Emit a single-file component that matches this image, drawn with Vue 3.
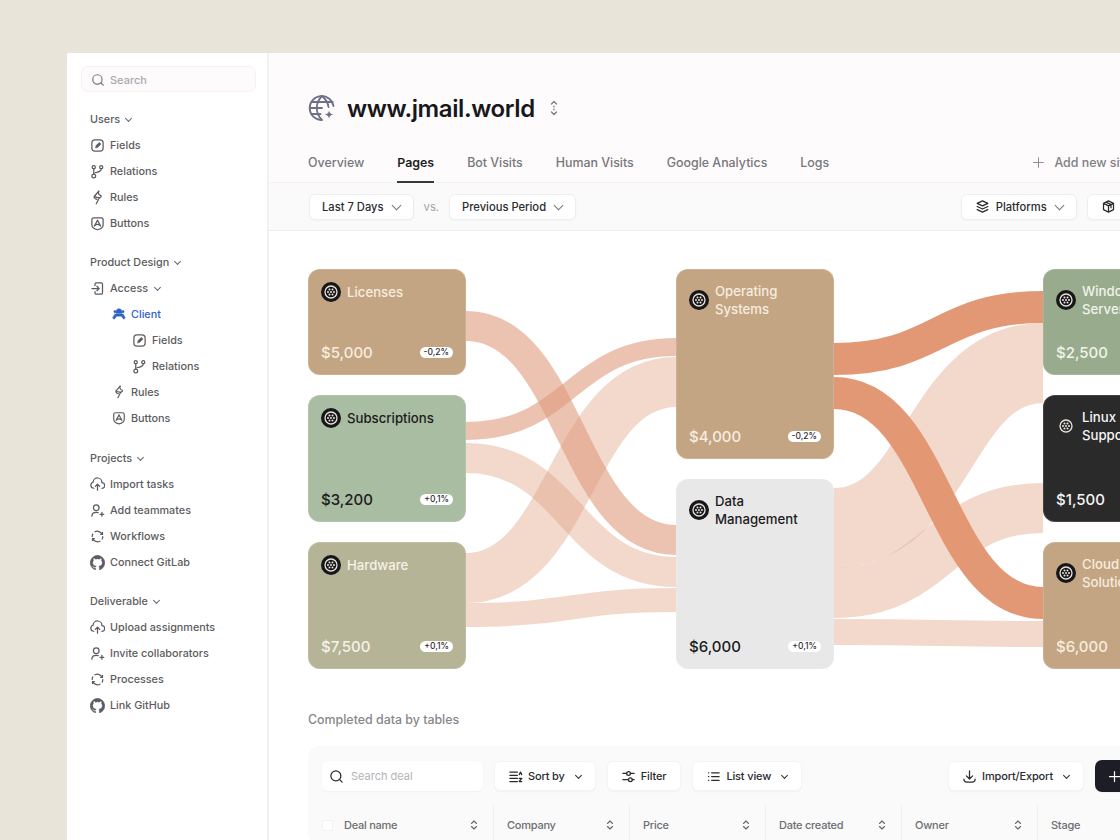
<template>
  <div class="panel">
    <aside class="sidebar">
      <div class="search">
        <svg class="ico" viewBox="0 0 24 24"><circle cx="11" cy="11" r="8" /><path d="M17 17l4 4" /></svg>
        <span>Search</span>
      </div>
      <section v-for="group in nav" :key="group.title" class="group">
        <div class="group-title">{{ group.title }}<span class="caret"></span></div>
        <div
          v-for="item in group.items"
          :key="item.label + item.level"
          class="nav-item"
          :class="['level-' + (item.level || 0), { active: item.active }]"
        >
          <svg class="ico" viewBox="0 0 24 24" :class="{ solid: item.icon === 'client' || item.icon === 'github' }">
            <path v-for="d in icons[item.icon]" :key="d" :d="d" />
            <path v-if="item.icon === 'edit'" class="pencil" d="M9 15.500l.8-3.500 5-5 2.700 2.700-5 5z" />
          </svg>
          <span>{{ item.label }}</span>
          <span v-if="item.caret" class="caret"></span>
        </div>
      </section>
    </aside>

    <main class="main">
      <header class="head">
        <div class="title-row">
          <svg class="globe" viewBox="0 0 28 28">
            <path d="M25.500 12A12 12 0 1 0 13 26" />
            <path d="M2 14h12M3.500 8h21M3.500 20h9" />
            <path d="M14 2c-7 7-7 17 0 24M14 2c4 3.500 6 7 6.500 11" />
            <path class="spark" d="M21 15.500l1.500 3.500 3.500 1.500-3.500 1.500-1.500 3.500-1.500-3.500-3.500-1.500 3.500-1.500z" />
          </svg>
          <h1>www.jmail.world</h1>
          <svg class="updown" viewBox="0 0 10 18">
            <path d="M2.500 5L5 2.500 7.500 5M2.500 13L5 15.500 7.500 13M5 7v1M5 10v1" />
          </svg>
        </div>
        <nav class="tabs">
          <a v-for="tab in tabs" :key="tab" class="tab" :class="{ current: tab === 'Pages' }">{{ tab }}</a>
          <span class="add-site">
            <svg class="ico" viewBox="0 0 24 24"><path d="M12 3v18M3 12h18" /></svg>
            Add new site
          </span>
        </nav>
      </header>

      <div class="filters">
        <button class="btn period">Last 7 Days<span class="chev"></span></button>
        <span class="vs">vs.</span>
        <button class="btn period">Previous Period<span class="chev"></span></button>
        <button class="btn push platform">
          <svg class="ico dark" viewBox="0 0 24 24">
            <path d="M12 3l8.500 4-8.500 4-8.500-4zM3.500 12l8.500 4 8.500-4M3.500 17l8.500 4 8.500-4" />
          </svg>
          Platforms<span class="chev"></span>
        </button>
        <button class="btn platform">
          <svg class="ico dark" viewBox="0 0 24 24">
            <path d="M12 3l8 4v10l-8 4-8-4V7zM4 7l8 4 8-4M12 11v10M8 5l8 4v5" />
          </svg>
          Browsers<span class="chev"></span>
        </button>
      </div>

      <section class="sankey">
        <svg class="ribbons" viewBox="308 269 812 400">
          <path
            v-for="r in ribbons"
            :key="r.id"
            :d="ribbonPath(r)"
            :class="r.tone"
            :stroke-width="r.w"
          />
        </svg>
        <div v-for="(col, i) in columns" :key="i" class="col">
          <article
            v-for="card in col"
            :key="card.name"
            class="card"
            :class="card.cls"
            :style="{ height: card.h + 'px' }"
          >
            <div class="card-top">
              <svg class="badge-ico" viewBox="0 0 20 20">
                <circle class="disc" cx="10" cy="10" r="10" />
                <circle class="ring" cx="10" cy="10" r="6" />
                <circle v-for="p in dots" :key="p[0] + '-' + p[1]" class="dot" :cx="p[0]" :cy="p[1]" r="1" />
              </svg>
              <div class="card-name">{{ card.name }}</div>
            </div>
            <div class="card-foot">
              <span class="card-value">{{ card.value }}</span>
              <span class="card-delta">{{ card.delta }}</span>
            </div>
          </article>
        </div>
      </section>

      <h2 class="sub">Completed data by tables</h2>

      <section class="table">
        <div class="toolbar">
          <div class="deal-search">
            <svg class="ico dark" viewBox="0 0 24 24"><circle cx="11" cy="11" r="8" /><path d="M17 17l4 4" /></svg>
            <span>Search deal</span>
          </div>
          <button class="btn tool">
            <svg class="ico dark" viewBox="0 0 24 24"><path d="M3 5h12M3 10h12M3 15h12M3 20h12M18 9l2-4 2 4M18 15h4l-4 5h4" /></svg>
            Sort by<span class="caret dark-caret"></span>
          </button>
          <button class="btn tool">
            <svg class="ico dark" viewBox="0 0 24 24"><path d="M3 7h6M15 7h6M3 17h9M18 17h3" /><circle cx="12" cy="7" r="3" /><circle cx="15" cy="17" r="3" /></svg>
            Filter
          </button>
          <button class="btn tool">
            <svg class="ico dark" viewBox="0 0 24 24"><path d="M9 6h12M9 12h12M9 18h12M4 6h.5M4 12h.5M4 18h.5" /></svg>
            List view<span class="caret dark-caret"></span>
          </button>
          <button class="btn tool push">
            <svg class="ico dark" viewBox="0 0 24 24"><path d="M12 3v13M7 11l5 5 5-5M3 16c0 3 2 5 5 5h8c3 0 5-2 5-5" /></svg>
            Import/Export<span class="caret dark-caret"></span>
          </button>
          <button class="btn add">
            <svg class="ico" viewBox="0 0 24 24"><path d="M12 4v16M4 12h16" /></svg>
            Add deal
          </button>
        </div>
        <div class="thead">
          <div v-for="(c, i) in tableCols" :key="c" class="th" :class="{ first: i === 0 }">
            <span v-if="i === 0" class="check"></span>
            <span class="th-label">{{ c }}</span>
            <svg class="th-sort" viewBox="0 0 8 12"><path d="M1.500 4.500L4 2l2.500 2.500M1.500 7.500L4 10l2.500-2.500" /></svg>
          </div>
        </div>
      </section>
    </main>
  </div>
</template>

<script setup>
const icons = {
  edit: ['M8 3h8a5 5 0 0 1 5 5v8a5 5 0 0 1-5 5H8a5 5 0 0 1-5-5V8a5 5 0 0 1 5-5z'],
  branch: ['M6 8v8', 'M18 8c0 4-4 5-10 6', 'M6 2.500a2.500 2.500 0 1 1 0 5 2.500 2.500 0 0 1 0-5z', 'M18 2.500a2.500 2.500 0 1 1 0 5 2.500 2.500 0 0 1 0-5z', 'M6 16a3 3 0 1 1 0 6 3 3 0 0 1 0-6z'],
  bolt: ['M14 2L7 10c2 2 5 2 8 2.500L10 22', 'M14 2c-1 2-1 4 1 5.500 1.500 1 3 1.500 3 2.500 0 1.500-2 2-3 2.500', 'M7 10c-1 1.500 0 3 1.500 4L11 15'],
  shield: ['M6 3h12a3 3 0 0 1 3 3v8c0 4-4 7-9 8-5-1-9-4-9-8V6a3 3 0 0 1 3-3z', 'M12 7l-5 9', 'M12 7l5 9', 'M8 15c2-2 6-2 8 0'],
  access: ['M3 12h11', 'M11 8.500l3.500 3.500-3.500 3.500', 'M8 7V5a2 2 0 0 1 2-2h8a2 2 0 0 1 2 2v14a2 2 0 0 1-2 2h-8a2 2 0 0 1-2-2v-2'],
  client: ['M12 3a5 5 0 0 1 5 5v3H7V8a5 5 0 0 1 5-5z', 'M5 12h14l4 7-3 2-4-5H8l-4 5-3-2z', 'M5 6a2 2 0 1 1 0 4 2 2 0 0 1 0-4z', 'M19 6a2 2 0 1 1 0 4 2 2 0 0 1 0-4z'],
  cloud: ['M6 18a5 5 0 0 1-1-9.800A7 7 0 0 1 19 9a4.500 4.500 0 0 1 0 9', 'M12 21v-9', 'M8.500 15l3.500-3.500 3.500 3.500'],
  userPlus: ['M10 3a4.500 4.500 0 1 1 0 9 4.500 4.500 0 0 1 0-9z', 'M3 21c0-4 3-6 7-6 1 0 2 .1 3 .5', 'M19 15v6', 'M16 18h6'],
  cycle: ['M19.500 8.500A8.500 8.500 0 0 0 8 4.500', 'M4.500 15.500A8.500 8.500 0 0 0 16 19.500', 'M3.500 12a8.500 8.500 0 0 1 1-4', 'M20.500 12a8.500 8.500 0 0 1-1 4', 'M17 8.500h3v-3', 'M7 15.500H4v3'],
  github: ['M12 .5a12 12 0 0 0-3.800 23.300c.6.1.8-.3.8-.6v-2c-3.300.7-4-1.600-4-1.600-.6-1.400-1.400-1.800-1.400-1.800-1-.7.1-.7.1-.7 1.200 0 1.900 1.200 1.900 1.200 1 1.800 2.800 1.300 3.500 1 0-.8.4-1.300.7-1.600-2.700-.3-5.500-1.300-5.500-6 0-1.200.5-2.300 1.300-3.100-.2-.4-.6-1.600 0-3.200 0 0 1-.3 3.400 1.200a11.500 11.500 0 0 1 6 0c2.300-1.500 3.300-1.200 3.300-1.200.6 1.600.2 2.800 0 3.200.9.8 1.300 1.900 1.300 3.200 0 4.600-2.800 5.600-5.500 5.900.5.4.9 1 .9 2.200v3.300c0 .3.1.7.8.6A12 12 0 0 0 12 .5z']
}

const nav = [
  { title: 'Users', items: [
    { label: 'Fields', icon: 'edit' },
    { label: 'Relations', icon: 'branch' },
    { label: 'Rules', icon: 'bolt' },
    { label: 'Buttons', icon: 'shield' }
  ] },
  { title: 'Product Design', items: [
    { label: 'Access', icon: 'access', caret: true },
    { label: 'Client', icon: 'client', level: 1, active: true },
    { label: 'Fields', icon: 'edit', level: 2 },
    { label: 'Relations', icon: 'branch', level: 2 },
    { label: 'Rules', icon: 'bolt', level: 1 },
    { label: 'Buttons', icon: 'shield', level: 1 }
  ] },
  { title: 'Projects', items: [
    { label: 'Import tasks', icon: 'cloud' },
    { label: 'Add teammates', icon: 'userPlus' },
    { label: 'Workflows', icon: 'cycle' },
    { label: 'Connect GitLab', icon: 'github' }
  ] },
  { title: 'Deliverable', items: [
    { label: 'Upload assignments', icon: 'cloud' },
    { label: 'Invite collaborators', icon: 'userPlus' },
    { label: 'Processes', icon: 'cycle' },
    { label: 'Link GitHub', icon: 'github' }
  ] }
]

const tabs = ['Overview', 'Pages', 'Bot Visits', 'Human Visits', 'Google Analytics', 'Logs']

const columns = [
  [
    { name: 'Licenses', value: '$5,000', delta: '-0,2%', h: 106, cls: 'tan' },
    { name: 'Subscriptions', value: '$3,200', delta: '+0,1%', h: 128, cls: 'sage' },
    { name: 'Hardware', value: '$7,500', delta: '+0,1%', h: 127, cls: 'olive' }
  ],
  [
    { name: 'Operating Systems', value: '$4,000', delta: '-0,2%', h: 190, cls: 'tan' },
    { name: 'Data Management', value: '$6,000', delta: '+0,1%', h: 190, cls: 'grey' }
  ],
  [
    { name: 'Windows Servers', value: '$2,500', delta: '+0,1%', h: 106, cls: 'green' },
    { name: 'Linux Support', value: '$1,500', delta: '+0,1%', h: 128, cls: 'black' },
    { name: 'Cloud Solutions', value: '$6,000', delta: '+0,1%', h: 127, cls: 'tan' }
  ]
]

// sankey links in page coordinates: x range, centre y at each end, band width
const ribbons = [
  { id: 'hw-os', x0: 466, x1: 676, y0: 578, y1: 382, w: 50, tone: 'pale' },
  { id: 'hw-data', x0: 466, x1: 676, y0: 615, y1: 600, w: 24, tone: 'pale' },
  { id: 'sub-data', x0: 466, x1: 676, y0: 458, y1: 572, w: 30, tone: 'pale' },
  { id: 'lic-data', x0: 466, x1: 676, y0: 326, y1: 540, w: 30, tone: 'mid' },
  { id: 'sub-os', x0: 466, x1: 676, y0: 431, y1: 347, w: 18, tone: 'mid' },
  { id: 'data-win', x0: 834, x1: 1043, y0: 528, y1: 363, w: 80, tone: 'pale' },
  { id: 'data-linux', x0: 834, x1: 1043, y0: 593, y1: 508, w: 50, tone: 'pale' },
  { id: 'data-cloud', x0: 834, x1: 1043, y0: 632, y1: 634, w: 26, tone: 'pale' },
  { id: 'os-win', x0: 834, x1: 1043, y0: 359, y1: 307, w: 32, tone: 'strong' },
  { id: 'os-cloud', x0: 834, x1: 1043, y0: 393, y1: 603, w: 32, tone: 'strong' }
]

function ribbonPath(r) {
  const m = (r.x0 + r.x1) / 2
  return `M${r.x0} ${r.y0}C${m} ${r.y0} ${m} ${r.y1} ${r.x1} ${r.y1}`
}

const dots = [[10, 10], [7, 10], [13, 10], [8.5, 7.4], [11.5, 7.4], [8.5, 12.6], [11.5, 12.6]]

const tableCols = ['Deal name', 'Company', 'Price', 'Date created', 'Owner', 'Stage']
</script>

<style scoped>
.panel {
  display: flex;
  width: 1053px;
  height: 787px;
  margin: 53px 0 0 67px;
  background: #fff;
  overflow: hidden;
  font-family: Inter, "Liberation Sans", sans-serif;
}

.ico {
  width: 15px;
  height: 15px;
  flex: none;
  fill: none;
  stroke: currentColor;
  stroke-width: 2;
  stroke-linecap: round;
  stroke-linejoin: round;
}

.ico.solid {
  fill: currentColor;
  stroke-width: 0.6;
}

.ico .pencil {
  fill: currentColor;
  stroke-width: 1;
}

.ico.dark {
  color: #2b2b2f;
}

/* sidebar */
.sidebar {
  flex: none;
  box-sizing: border-box;
  width: 202px;
  padding: 13px 11px 0 14px;
  border-right: 2px solid #f2f1f1;
  color: #5c5c60;
  font-size: 10.8px;
  font-weight: 500;
}

.search {
  display: flex;
  align-items: center;
  gap: 5px;
  height: 26px;
  padding: 1px 0 0 9px;
  border: 1px solid #f5f2f3;
  border-radius: 7px;
  background: #fdfbfc;
  color: #a9a9ad;
  box-sizing: border-box;
  font-size: 11px;
}

.search .ico {
  width: 14px;
  height: 14px;
  color: #77777b;
}

.group {
  padding-left: 9px;
  margin-bottom: 13px;
}

.group:nth-child(3) {
  margin-bottom: 14px;
}

.search + .group {
  margin-top: 14px;
}

.group-title,
.nav-item {
  display: flex;
  align-items: center;
  height: 26px;
}

.nav-item {
  gap: 5px;
}

.caret {
  display: inline-block;
  width: 4px;
  height: 4px;
  margin: -2px 0 0 6px;
  border-right: 1.2px solid #66666a;
  border-bottom: 1.2px solid #66666a;
  transform: rotate(45deg);
}

.nav-item .caret {
  margin-left: 2px;
}

.level-1 {
  padding-left: 22px;
}

.level-1 .ico {
  width: 14px;
  height: 14px;
}

.level-2 {
  padding-left: 42px;
}

.active {
  color: #2f62c4;
}

/* main */
.main {
  flex: 1;
  min-width: 0;
  overflow: hidden;
}

.head {
  height: 130px;
  box-sizing: border-box;
  padding: 0 0 0 39px;
  background: #fdfbfc;
  border-bottom: 1px solid #f3f1f2;
}

.title-row {
  display: flex;
  align-items: center;
  height: 82px;
  padding-top: 28px;
  box-sizing: border-box;
}

.globe {
  width: 28px;
  height: 28px;
  flex: none;
  margin-right: 11px;
  fill: none;
  stroke: #6e7086;
  stroke-width: 1.8;
  stroke-linecap: round;
}

.globe .spark {
  fill: #6e7086;
  stroke: #fdfbfc;
  stroke-width: 1;
}

h1 {
  margin: 0;
  color: #18181b;
  font-size: 24px;
  font-weight: 600;
  letter-spacing: -0.4px;
}

.updown {
  width: 10px;
  height: 18px;
  margin-left: 14px;
  fill: none;
  stroke: #77777b;
  stroke-width: 1.2;
  stroke-linecap: round;
  stroke-linejoin: round;
}

.tabs {
  display: flex;
  gap: 33px;
  width: 823px;
  height: 48px;
  align-items: flex-start;
  padding-top: 20px;
  box-sizing: border-box;
  color: #77777b;
  font-size: 12.4px;
  font-weight: 500;
}

.tab {
  position: relative;
  height: 28px;
  white-space: nowrap;
}

.tab.current {
  color: #1e1e21;
  font-weight: 600;
}

.tab.current::after {
  content: "";
  position: absolute;
  left: 0;
  right: 0;
  bottom: 0;
  height: 2px;
  background: #38383c;
}

.add-site {
  display: flex;
  align-items: center;
  gap: 9px;
  margin-left: auto;
  white-space: nowrap;
  color: #808084;
}

.add-site .ico {
  width: 13px;
  height: 13px;
  stroke-width: 1.6;
}

.filters {
  display: flex;
  align-items: center;
  width: 893px;
  height: 47px;
  padding: 0 0 0 40px;
  background: #fbfafa;
  border-bottom: 1px solid #efeeee;
  box-shadow: -40px 0 0 #fbfafa;
}

.btn {
  display: inline-flex;
  align-items: center;
  height: 26px;
  padding: 0 12px;
  border: 1px solid #f0efef;
  border-radius: 6px;
  background: #fff;
  box-shadow: 0 1px 2px rgba(30, 30, 40, 0.04);
  color: #2b2b2f;
  font: 500 11.2px Inter, "Liberation Sans", sans-serif;
  white-space: nowrap;
  box-sizing: border-box;
}

.chev {
  width: 6px;
  height: 6px;
  margin: -3px 1px 0 9px;
  border-right: 1.2px solid #77777b;
  border-bottom: 1.2px solid #77777b;
  transform: rotate(45deg);
}

.vs {
  margin: 0 10px;
  color: #a3a3a7;
  font-size: 11.2px;
}

.push {
  margin-left: auto;
}

.platform {
  gap: 6px;
  padding: 0 12px 0 13px;
}

.platform .chev {
  margin-left: 3px;
}

.platform + .platform {
  margin-left: 10px;
}

/* sankey: ribbons lie under the cards, cards stay in flow */
.sankey {
  position: relative;
  display: flex;
  gap: 209px;
  width: 812px;
  margin: 38px 0 0 39px;
}

.ribbons {
  position: absolute;
  left: 0;
  top: 0;
  width: 812px;
  height: 400px;
  fill: none;
}

.ribbons .pale {
  stroke: #de9a7a;
  stroke-opacity: 0.38;
}

.ribbons .mid {
  stroke: #e09a7d;
  stroke-opacity: 0.6;
}

.ribbons .strong {
  stroke: #e2946f;
  stroke-opacity: 0.96;
}

.col {
  position: relative;
  display: flex;
  flex: none;
  flex-direction: column;
  gap: 20px;
  width: 158px;
  height: 400px;
  justify-content: space-between;
}

.col:first-of-type {
  margin-right: 1px;
}

.card {
  display: flex;
  flex-direction: column;
  justify-content: space-between;
  box-sizing: border-box;
  padding: 13px;
  border-radius: 12px;
  box-shadow: inset 0 0 0 1px rgba(255, 255, 255, 0.12);
  color: #f6ecdf;
}

.tan { background: #c4a583; }
.sage { background: #a9bda2; color: #1c1c1c; }
.olive { background: #b5b497; color: #f5f2e6; }
.grey { background: #e8e8e9; color: #1c1c1c; }
.green { background: #98ab8d; color: #f1f3ea; }
.black { background: #2a2a2a; color: #f5f5f5; }

.card-top {
  display: flex;
  align-items: center;
  gap: 6px;
}

.badge-ico {
  width: 20px;
  height: 20px;
  flex: none;
}

.badge-ico .disc { fill: #17171a; }
.badge-ico .ring { fill: none; stroke: #e8e4dc; stroke-width: 1.3; }
.badge-ico .dot { fill: #e8e4dc; }

.black .badge-ico .disc { fill: #2a2a2a; }

.card-name {
  width: min-content;
  font-size: 13.2px;
  font-weight: 500;
  line-height: 18px;
}

.card-foot {
  display: flex;
  align-items: center;
  justify-content: space-between;
}

.card-value {
  font-size: 15px;
  font-weight: 500;
}

.card-delta {
  padding: 1px 4px;
  border-radius: 6px;
  background: #fff;
  color: #2b2b2f;
  font-size: 8.5px;
  font-weight: 500;
  line-height: 9px;
}

/* table */
.sub {
  margin: 43px 0 0 39px;
  color: #87878b;
  font-size: 12.4px;
  font-weight: 500;
  line-height: 16px;
}

.table {
  width: 911px;
  box-sizing: border-box;
  margin: 18px 0 0 39px;
  padding: 14px 14px 0;
  border-radius: 12px;
  background: #fafafa;
}

.toolbar {
  display: flex;
  align-items: center;
  gap: 11px;
  height: 32px;
}

.deal-search {
  display: flex;
  align-items: center;
  gap: 7px;
  width: 161px;
  height: 30px;
  padding-left: 7px;
  box-sizing: border-box;
  border-radius: 6px;
  background: #fff;
  box-shadow: 0 1px 2px rgba(30, 30, 40, 0.04);
  color: #b3b3b7;
  font-size: 11px;
}

.tool {
  height: 30px;
  gap: 5px;
  padding: 0 14px 0 13px;
  border-color: #f5f4f4;
  font-size: 11px;
  letter-spacing: -0.15px;
}

.dark-caret {
  margin-left: 6px;
  border-color: #2b2b2f;
}

.add {
  height: 32px;
  width: 110px;
  gap: 6px;
  padding: 0 12px;
  border: 0;
  border-radius: 7px;
  background: #1c1d26;
  color: #fff;
}

.thead {
  display: flex;
  height: 40px;
  margin-top: 13px;
  color: #6e6e72;
  font-size: 11px;
  font-weight: 500;
  letter-spacing: -0.25px;
}

.th {
  display: flex;
  align-items: center;
  flex: none;
  width: 136px;
  box-sizing: border-box;
  padding: 0 15px 0 13px;
  border-left: 1px solid #f0efef;
}

.th.first {
  width: 171px;
  padding-left: 0;
  border-left: 0;
}

.check {
  width: 11px;
  height: 11px;
  box-sizing: border-box;
  margin-right: 11px;
  border-radius: 2px;
  background: #fff;
  border: 1px solid #f3f2f2;
}

.th-label {
  flex: 1;
}

.th-sort {
  width: 8px;
  height: 12px;
  fill: none;
  stroke: #66666a;
  stroke-width: 1.1;
  stroke-linecap: round;
  stroke-linejoin: round;
}
</style>

<style>
html,
body {
  margin: 0;
  width: 1120px;
  height: 840px;
  overflow: hidden;
  background: #e9e4d9;
}
</style>
